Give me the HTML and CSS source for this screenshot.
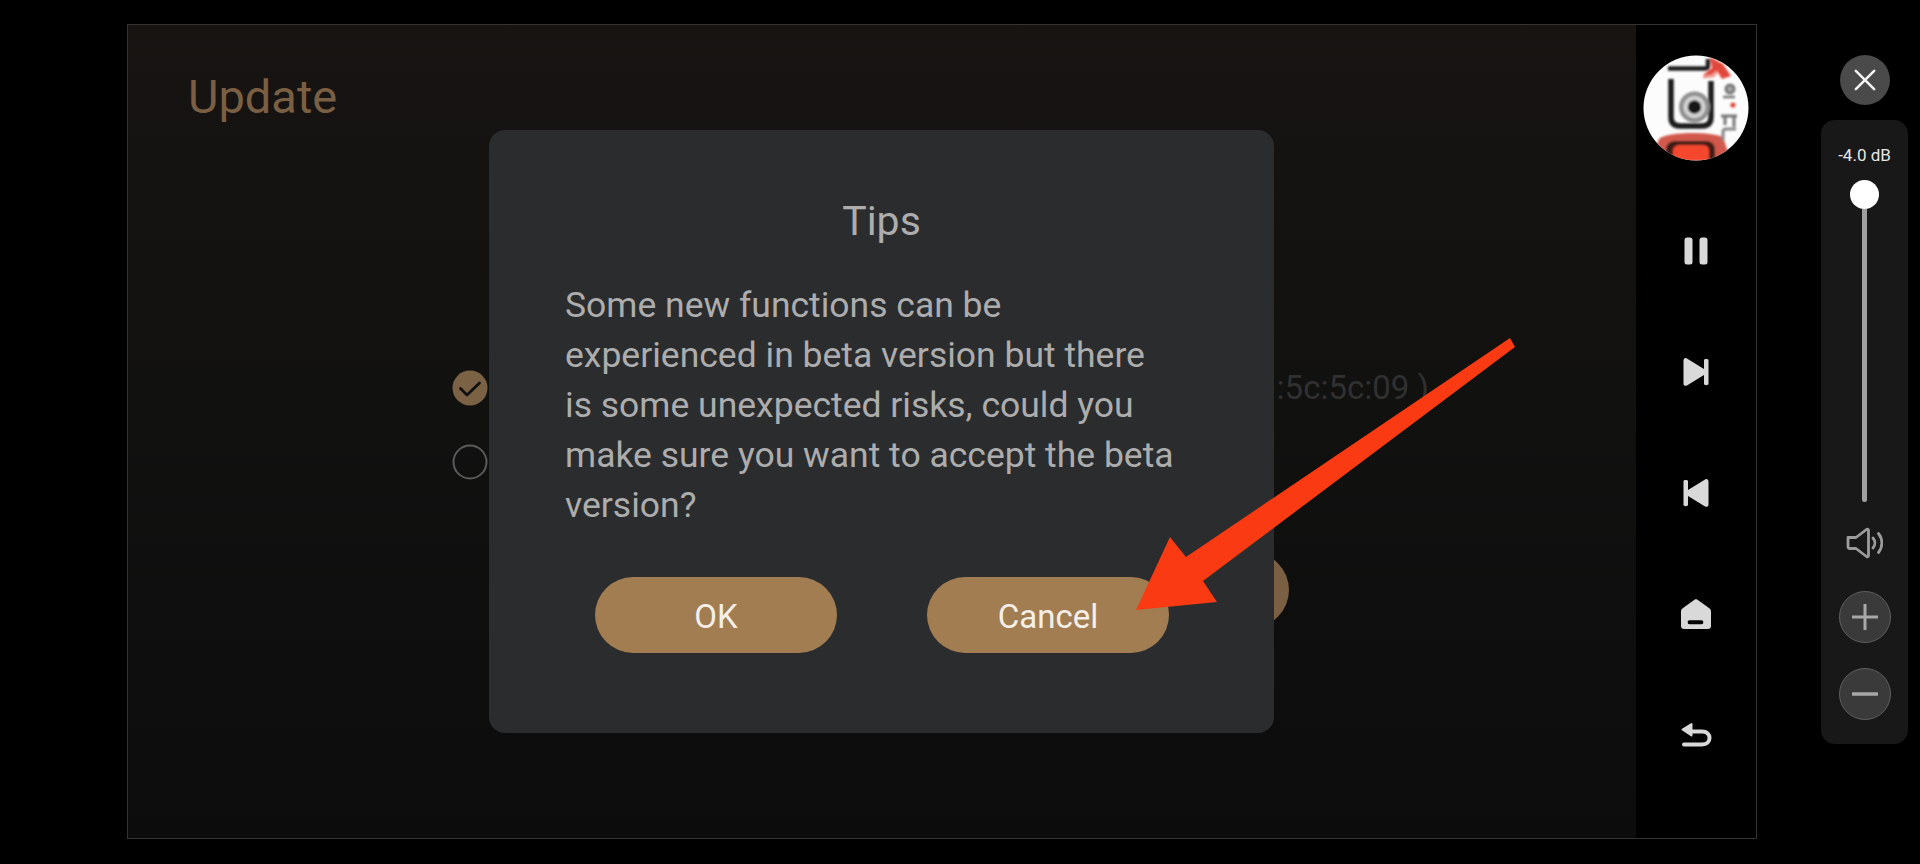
FILE: index.html
```html
<!DOCTYPE html>
<html lang="en">
<head>
<meta charset="utf-8">
<title>Update</title>
<link rel="stylesheet" href="styles.css">
</head>
<body>
<div class="screen">
  <div class="frame">
    <main class="main">
      <h1 class="page-title">Update</h1>
      <div class="options">
        <div class="option">
          <svg class="radio" viewBox="0 0 36 36"><circle cx="18" cy="18" r="17.500" fill="#7c6245"/><path d="M8.500 18.500l6.500 6.500 12.500-12" fill="none" stroke="#111" stroke-width="2.800" stroke-linecap="round" stroke-linejoin="round"/></svg>
          <span class="option-text">:5c:5c:09 )</span>
        </div>
        <div class="option">
          <svg class="radio" viewBox="0 0 36 36"><circle cx="18" cy="18" r="16.500" fill="none" stroke="#5a5a5a" stroke-width="2"/></svg>
        </div>
      </div>
      <div class="update-btn"></div>
      <div class="dialog">
        <h2 class="dialog-title">Tips</h2>
        <p class="dialog-text">Some new functions can be<br>experienced in beta version but there<br>is some unexpected risks, could you<br>make sure you want to accept the beta<br>version?</p>
        <div class="dialog-actions">
          <button class="pill">OK</button>
          <button class="pill">Cancel</button>
        </div>
      </div>
    </main>
    <aside class="sidebar">
      <svg class="avatar" viewBox="0 0 106 106">
        <defs>
          <clipPath id="disc"><circle cx="53" cy="53" r="52.500"/></clipPath>
          <filter id="soft" x="-10%" y="-10%" width="120%" height="120%"><feGaussianBlur stdDeviation="0.900"/></filter>
        </defs>
        <g clip-path="url(#disc)">
          <rect width="106" height="106" fill="#fdfcfc"/>
          <g filter="url(#soft)">
            <path d="M16 84C24 77 64 76 80 82L88 106H8z" fill="#d2584c"/>
            <path d="M23 106V95c0-6 4-9 10-9h29c6 0 10 3 10 9v11z" fill="#3a1a18"/>
            <path d="M30 106V96c0-4 3-6 7-6h22c5 0 7 2 7 6v10z" fill="#f4472f"/>
            <path d="M25 13.500h37c2 0 3-1 3-3V4" fill="none" stroke="#1c1c1c" stroke-width="4.500"/>
            <path d="M28 24v38c0 6 3 9 9 9h22c6 0 9-3 9-9V26" fill="none" stroke="#1c1c1c" stroke-width="5.500"/>
            <circle cx="51.500" cy="52" r="15.500" fill="#8f8f8f"/>
            <circle cx="51.500" cy="52" r="11" fill="#d4d4d4"/>
            <circle cx="51.500" cy="52" r="6.800" fill="#161616"/>
            <path d="M67 2l13 7 8 12-9 3-5-8-9 6-5-2 9-7z" fill="#e3473a"/>
            <path d="M60 22l10-1 4-4" fill="none" stroke="#ec9c94" stroke-width="3"/>
            <circle cx="87" cy="34" r="5.500" fill="#777"/>
            <circle cx="87" cy="34" r="2.500" fill="#aaa"/>
            <path d="M80 42h12" stroke="#777" stroke-width="2.500"/>
            <circle cx="90" cy="50" r="2.600" fill="#e4483c"/>
            <path d="M78 61h16M82 61v9M91 61v11" fill="none" stroke="#777" stroke-width="3"/>
            <path d="M80 86v-9c0-2 1-3 3-3h10" fill="none" stroke="#888" stroke-width="3"/>
          </g>
        </g>
      </svg>
      <svg class="side-icon" viewBox="0 0 32 32"><rect x="4.500" y="2.500" width="8" height="27" rx="2.500" fill="#d9d9d9"/><rect x="19.500" y="2.500" width="8" height="27" rx="2.500" fill="#d9d9d9"/></svg>
      <svg class="side-icon" viewBox="0 0 32 32"><path d="M3.500 4.500c0-2 1.800-3 3.400-2l17.100 10.500V4c0-1.500 4.500-1.500 4.500 0v24c0 1.500-4.500 1.500-4.500 0v-9L6.900 29.500c-1.700 1-3.400-.2-3.400-2z" fill="#d9d9d9"/></svg>
      <svg class="side-icon" viewBox="0 0 32 32"><path d="M28.500 4.500c0-2-1.800-3-3.400-2L8 13V4C8 2.500 3.500 2.500 3.500 4v24c0 1.500 4.500 1.500 4.500 0v-9l17.100 10.500c1.700 1 3.400-.2 3.400-2z" fill="#d9d9d9"/></svg>
      <svg class="side-icon" viewBox="0 0 32 32"><path fill-rule="evenodd" d="M14.500 1.800c.9-.6 2.100-.6 3 0L29 10c1.300 1 2 2 2 3.500V28c0 2-1 3-3 3H4c-2 0-3-1-3-3V13.500c0-1.500.7-2.500 2-3.500zM9.500 22.300c-1.200 0-1.800.8-1.800 2s.6 2 1.800 2h12c1.200 0 1.800-.8 1.800-2s-.6-2-1.800-2z" fill="#d9d9d9"/></svg>
      <svg class="side-icon" viewBox="0 0 32 32"><path d="M8 12.500h14c5 0 7.500 3 7.500 6.500s-2.500 6.500-7.500 6.500H4" fill="none" stroke="#d9d9d9" stroke-width="4" stroke-linecap="round"/><path d="M11.500 5v11.500L2.500 10.500z" fill="#d9d9d9" stroke="#d9d9d9" stroke-width="2" stroke-linejoin="round"/></svg>
    </aside>
  </div>
  <div class="controls">
    <button class="close" aria-label="Close"><svg viewBox="0 0 24 24"><path d="M2 2l20 20M22 2L2 22" stroke="#f2f2f2" stroke-width="2.800" stroke-linecap="round"/></svg></button>
    <section class="volume">
      <div class="db">-4.0 dB</div>
      <div class="slider"><span class="knob"></span><span class="track"></span></div>
      <svg class="speaker" viewBox="0 0 37 32"><path d="M2 10.500h8L20.500 2.500c1-.7 2-.2 2 1v25c0 1.200-1 1.700-2 1L10 21.500H4c-1.200 0-2-.8-2-2z" fill="none" stroke="#9b9b9b" stroke-width="2.800" stroke-linejoin="round"/><path d="M27 11c2.500 3 2.500 7 0 10M32.500 6.500c4.500 5.500 4.500 13.500 0 19" fill="none" stroke="#9b9b9b" stroke-width="2.800" stroke-linecap="round"/></svg>
      <button class="step" aria-label="Louder"><svg viewBox="0 0 26 26"><path d="M0 13h26M13 0v26" stroke="#a8a8a8" stroke-width="3"/></svg></button>
      <button class="step" aria-label="Quieter"><svg viewBox="0 0 26 26"><path d="M1 13h24" stroke="#a8a8a8" stroke-width="3.500" stroke-linecap="round"/></svg></button>
    </section>
  </div>
  <svg class="arrow" viewBox="0 0 1920 864"><path d="M1510 338L1515 347L1203 581L1217 602L1136 610L1170 537L1186 557Z" fill="#f93a12"/></svg>
</div>
</body>
</html>
```
FILE: styles.css
```css
* { box-sizing: border-box; }
html, body { margin: 0; height: 100%; background: #000; }
body { font-family: Roboto, "Liberation Sans", sans-serif; overflow: hidden; }
button { font-family: inherit; border: 0; padding: 0; }
h1, h2, p { margin: 0; font-weight: 400; }

.screen { position: relative; width: 1920px; height: 864px; display: flex; align-items: flex-start; padding: 24px 12px 0 127px; }

.frame { width: 1630px; height: 815px; display: flex; border: 1px solid #333; flex: none; }

.main { position: relative; flex: 1; display: flex; flex-direction: column; background: linear-gradient(#171412, #111110 45%, #0c0c0c); padding: 45px 0 0 60px; }
.page-title { font-size: 47px; line-height: 54px; color: #7a5f42; }

.options { display: flex; flex-direction: column; gap: 38px; margin: 246px 0 0 264px; }
.option { height: 36px; width: 977px; display: flex; align-items: center; justify-content: space-between; }
.radio { width: 36px; height: 36px; flex: none; }
.option-text { font-size: 33px; line-height: 36px; color: #303030; }

.update-btn { width: 242px; height: 76px; border-radius: 38px; background: #7a5f42; margin: 72px 0 0 859px; }

.dialog { position: absolute; left: 361px; top: 105px; width: 785px; height: 603px; border-radius: 16px; background: #2b2c2e; display: flex; flex-direction: column; }
.dialog-title { font-size: 41px; line-height: 48px; color: #adadad; text-align: center; margin-top: 67px; }
.dialog-text { font-size: 35.500px; line-height: 50px; color: #adadad; margin: 35px 0 0 76px; white-space: nowrap; }
.dialog-actions { display: flex; gap: 90px; margin: 47px 0 0 106px; }
.pill { width: 242px; height: 76px; border-radius: 38px; background: #a37d52; color: #f4efe8; font-size: 33px; padding-top: 2px; }

.sidebar { width: 120px; flex: none; background: #000; display: flex; flex-direction: column; align-items: center; padding-top: 30px; }
.avatar { width: 106px; height: 106px; flex: none; margin-bottom: 74px; }
.side-icon { width: 32px; height: 32px; flex: none; margin-bottom: 89px; }

.controls { margin-left: 64px; width: 87px; display: flex; flex-direction: column; align-items: center; flex: none; padding-top: 31px; }
.close { width: 50px; height: 50px; border-radius: 50%; background: #4a4a4a; display: flex; align-items: center; justify-content: center; }
.close svg { width: 22px; height: 22px; }

.volume { width: 87px; height: 624px; margin-top: 15px; border-radius: 14px; background: #181818; display: flex; flex-direction: column; align-items: center; padding-top: 25px; }
.db { font-size: 17px; line-height: 20px; color: #e6e6e6; }
.slider { display: flex; flex-direction: column; align-items: center; margin-top: 15px; }
.knob { width: 29px; height: 29px; border-radius: 50%; background: #fff; flex: none; }
.track { width: 5px; height: 293px; background: #a0a0a0; border-radius: 0 0 3px 3px; }
.speaker { width: 37px; height: 32px; margin: 25px 0 0 0; flex: none; }
.step { width: 52px; height: 52px; border-radius: 50%; background: #3a3a3a; border: 1.500px solid #5e5e5e; display: flex; align-items: center; justify-content: center; margin-top: 25px; }
.step svg { width: 26px; height: 26px; }
.speaker + .step { margin-top: 32px; }

.arrow { position: absolute; left: 0; top: 0; width: 1920px; height: 864px; pointer-events: none; }
```
